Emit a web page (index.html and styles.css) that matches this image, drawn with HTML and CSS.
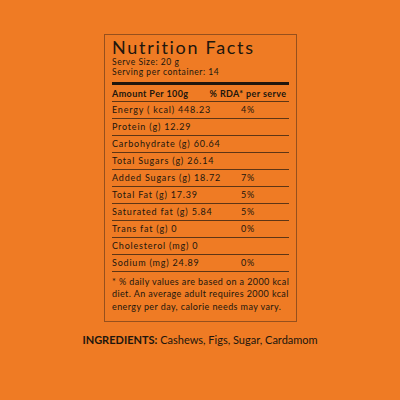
FILE: index.html
```html
<!DOCTYPE html>
<html lang="en">
<head>
    <meta charset="UTF-8">
    <title>Nutrition Facts</title>
    <link rel="stylesheet" href="styles.css">
</head>
<body>
    <div class="label">
        <div class="title">Nutrition Facts</div>
        <div class="serve">Serve Size: 20 g</div>
        <div class="serve">Serving per container: 14</div>
        <div class="thick"></div>

        <div class="row head">
            <span class="name">Amount Per 100g</span>
            <span class="rda">% RDA* per serve</span>
        </div>
        <div class="row"><span class="name">Energy ( kcal) 448.23</span><span class="rda">4%</span></div>
        <div class="row"><span class="name">Protein (g) 12.29</span><span class="rda"></span></div>
        <div class="row"><span class="name">Carbohydrate (g) 60.64</span><span class="rda"></span></div>
        <div class="row"><span class="name">Total Sugars (g) 26.14</span><span class="rda"></span></div>
        <div class="row"><span class="name">Added Sugars (g) 18.72</span><span class="rda">7%</span></div>
        <div class="row"><span class="name">Total Fat (g) 17.39</span><span class="rda">5%</span></div>
        <div class="row"><span class="name">Saturated fat (g) 5.84</span><span class="rda">5%</span></div>
        <div class="row"><span class="name">Trans fat (g) 0</span><span class="rda">0%</span></div>
        <div class="row"><span class="name">Cholesterol (mg) 0</span><span class="rda"></span></div>
        <div class="row"><span class="name">Sodium (mg) 24.89</span><span class="rda">0%</span></div>

        <p class="note">* % daily values are based on a 2000 kcal<br>diet. An average adult requires 2000 kcal<br>energy per day, calorie needs may vary.</p>
    </div>

    <p class="ingredients"><strong>INGREDIENTS:</strong> Cashews, Figs, Sugar, Cardamom</p>
</body>
</html>
```

FILE: styles.css
```css
html, body {
    margin: 0;
    padding: 0;
    height: 100%;
    background-color: #ef7b24;
    font-family: Lato, "Open Sans", sans-serif;
    color: #21160d;
}

body {
    display: flex;
    flex-direction: column;
    align-items: center;
}

.label {
    margin-top: 34px;
    margin-left: 1px;
    width: 177px;
    padding: 3px 7px 8px 7px;
    border: 1px solid #96501d;
}

.title {
    font-size: 18px;
    line-height: 18px;
    letter-spacing: 1.7px;
    margin-bottom: 1px;
}

.serve {
    font-size: 8.5px;
    line-height: 10.3px;
    letter-spacing: 0.55px;
}

.thick {
    height: 3px;
    background-color: #21160d;
    margin-top: 4px;
}

.row {
    display: flex;
    height: 16px;
    line-height: 16px;
    border-bottom: 1px solid #5e3515;
    font-size: 9px;
    letter-spacing: 0.8px;
    white-space: nowrap;
}

.row .name {
    flex: 1;
    min-width: 0;
}

.row .rda {
    flex-shrink: 0;
    width: 82px;
    text-align: center;
}

.row.head {
    font-weight: bold;
    letter-spacing: 0.4px;
    padding-top: 1px;
    height: 15px;
    line-height: 15px;
}

.note {
    margin: 4px 0 0;
    font-size: 9px;
    line-height: 12.5px;
    letter-spacing: 0.4px;
    white-space: nowrap;
}

.ingredients {
    margin: 11px 0 0;
    font-size: 11px;
    line-height: 13px;
}
```
